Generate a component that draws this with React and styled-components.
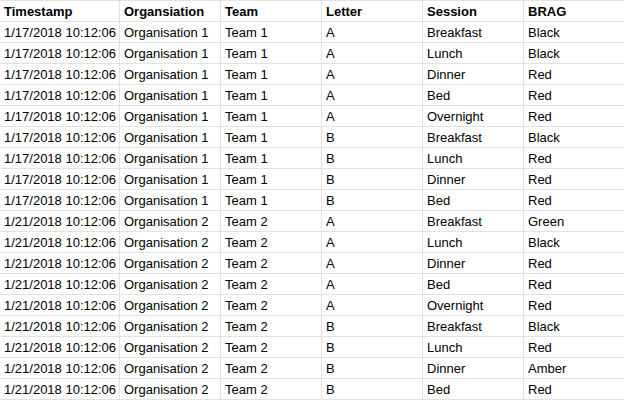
import React from 'react';
import styled, { createGlobalStyle } from 'styled-components';

const GlobalStyle = createGlobalStyle`
  html, body {
    margin: 0;
    padding: 0;
    background: #ffffff;
  }
  body {
    width: 624px;
    height: 400px;
    overflow: hidden;
  }
`;

const Sheet = styled.div`
  display: grid;
  grid-template-columns: 120px repeat(5, 101px);
  grid-auto-rows: 21px;
  border-top: 1px solid #e2e2e2;
  font-family: 'Liberation Sans', Arial, sans-serif;
  font-size: 13px;
  color: #000000;
`;

const Cell = styled.div`
  box-sizing: border-box;
  display: flex;
  align-items: flex-end;
  padding: 0 3px 1px 4px;
  border-right: 1px solid #e2e2e2;
  border-bottom: 1px solid #e2e2e2;
  line-height: 17px;
  white-space: nowrap;
  overflow: hidden;
  font-weight: ${(p) => (p.$head ? 700 : 400)};
`;

const headers = ['Timestamp', 'Organsiation', 'Team', 'Letter', 'Session', 'BRAG'];

const rows = [
  ['1/17/2018 10:12:06', 'Organisation 1', 'Team 1', 'A', 'Breakfast', 'Black'],
  ['1/17/2018 10:12:06', 'Organisation 1', 'Team 1', 'A', 'Lunch', 'Black'],
  ['1/17/2018 10:12:06', 'Organisation 1', 'Team 1', 'A', 'Dinner', 'Red'],
  ['1/17/2018 10:12:06', 'Organisation 1', 'Team 1', 'A', 'Bed', 'Red'],
  ['1/17/2018 10:12:06', 'Organisation 1', 'Team 1', 'A', 'Overnight', 'Red'],
  ['1/17/2018 10:12:06', 'Organisation 1', 'Team 1', 'B', 'Breakfast', 'Black'],
  ['1/17/2018 10:12:06', 'Organisation 1', 'Team 1', 'B', 'Lunch', 'Red'],
  ['1/17/2018 10:12:06', 'Organisation 1', 'Team 1', 'B', 'Dinner', 'Red'],
  ['1/17/2018 10:12:06', 'Organisation 1', 'Team 1', 'B', 'Bed', 'Red'],
  ['1/21/2018 10:12:06', 'Organisation 2', 'Team 2', 'A', 'Breakfast', 'Green'],
  ['1/21/2018 10:12:06', 'Organisation 2', 'Team 2', 'A', 'Lunch', 'Black'],
  ['1/21/2018 10:12:06', 'Organisation 2', 'Team 2', 'A', 'Dinner', 'Red'],
  ['1/21/2018 10:12:06', 'Organisation 2', 'Team 2', 'A', 'Bed', 'Red'],
  ['1/21/2018 10:12:06', 'Organisation 2', 'Team 2', 'A', 'Overnight', 'Red'],
  ['1/21/2018 10:12:06', 'Organisation 2', 'Team 2', 'B', 'Breakfast', 'Black'],
  ['1/21/2018 10:12:06', 'Organisation 2', 'Team 2', 'B', 'Lunch', 'Red'],
  ['1/21/2018 10:12:06', 'Organisation 2', 'Team 2', 'B', 'Dinner', 'Amber'],
  ['1/21/2018 10:12:06', 'Organisation 2', 'Team 2', 'B', 'Bed', 'Red'],
];

function App() {
  return (
    <>
      <GlobalStyle />
      <Sheet>
        {headers.map((h) => (
          <Cell key={h} $head>
            {h}
          </Cell>
        ))}
        {rows.map((row, i) =>
          row.map((value, j) => <Cell key={`${i}-${j}`}>{value}</Cell>)
        )}
      </Sheet>
    </>
  );
}

export default App;
